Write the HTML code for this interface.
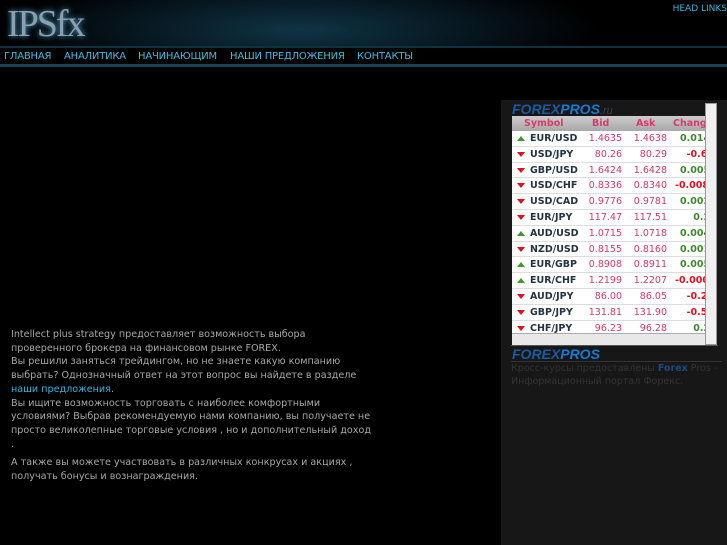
<!DOCTYPE html><html><head><meta charset="utf-8"><style>
body{margin:0;width:727px;height:545px;background:#000;overflow:hidden;font-family:"DejaVu Sans","Liberation Sans",sans-serif;position:relative}
.hdr{position:absolute;left:0;top:0;width:727px;height:48px;background:radial-gradient(ellipse 300px 60px at 300px 30px,#0f3446,#06141c 60%,#000 100%)}
.logo{position:absolute;left:7px;top:2px;font:38px "Liberation Serif",serif;color:#8aa0b0;letter-spacing:-2px;text-shadow:0 0 6px #5ab0e0}
.hl{position:absolute;right:0;top:4px;font-size:9px;color:#3ab7dd}
.nav{position:absolute;left:0;top:46px;width:727px;height:16px;background:#000;border-top:2px solid #0f3140;border-bottom:3px solid #164256}
.nav span{position:absolute;top:3px;font-size:10px;color:#4ab9dd;letter-spacing:-0.2px}
.txt{position:absolute;left:11px;top:328px;width:360px;font-size:9.6px;line-height:13.7px;color:#a8a8a8}
.txt a{color:#3ab5dd}
.panel{position:absolute;left:501px;top:100px;width:226px;height:445px;background:#171717}
.w{position:absolute;left:512px;top:116px;width:193px;height:229px;background:#fff;overflow:hidden}
.hd{height:15px;background:linear-gradient(#ccc,#a8a8a8);font-size:9.5px;font-weight:bold;color:#d93a6a;position:relative}
.r{height:15.8px;border-bottom:1px solid #ddd;box-sizing:border-box;position:relative;font-size:9.5px}
.r span,.hd span{position:absolute;top:2px}
.s{left:18px;font-weight:bold;color:#234}
.b{right:83px;color:#d0386a}.a{right:38px;color:#d0386a}
.c{left:168px;font-weight:bold;white-space:nowrap}
.g{color:#3a8a2a}.n{color:#e01020}
.ar{position:absolute;left:5px;top:5px;width:0;height:0;border-left:4px solid transparent;border-right:4px solid transparent}
.up{border-bottom:5px solid #3a9a2a}.dn{border-top:5px solid #e01020}
.sb{position:absolute;left:705px;top:103px;width:12px;height:242px;background:#f0f0f0;border:1px solid #999;box-sizing:border-box}
</style></head><body>
<div class="hdr"><div class="logo">IPSfx</div><div class="hl">HEAD LINKS</div></div>
<div class="nav"><span style="left:4px">ГЛАВНАЯ</span><span style="left:64px">АНАЛИТИКА</span><span style="left:138px">НАЧИНАЮЩИМ</span><span style="left:230px">НАШИ ПРЕДЛОЖЕНИЯ</span><span style="left:357px">КОНТАКТЫ</span></div>
<div class="txt">Intellect plus strategy предоставляет возможность выбора проверенного брокера на финансовом рынке FOREX.<br>Вы решили заняться трейдингом, но не знаете какую компанию выбрать? Однозначный ответ на этот вопрос вы найдете в разделе <a>наши предложения</a>.<br>Вы ищите возможность торговать с наиболее комфортными условиями? Выбрав рекомендуемую нами компанию, вы получаете не просто великолепные торговые условия , но и дополнительный доход .<div style="height:5px"></div>А также вы можете участвовать в различных конкрусах и акциях , получать бонусы и вознаграждения.</div>
<div class="panel"></div>
<div style="position:absolute;left:512px;top:101px;font:italic bold 14px 'Liberation Sans',sans-serif;color:#1a5aa0">FOREX<span style="color:#1a7ad0">PROS</span><span style="font-weight:normal;font-size:11px;color:#345">.ru</span></div>
<div class="w">
<div class="hd"><span style="left:12px">Symbol</span><span style="left:80px">Bid</span><span style="left:124px">Ask</span><span style="left:161px">Change</span></div>
<div class="r"><i class="ar up"></i><span class="s">EUR/USD</span><span class="b">1.4635</span><span class="a">1.4638</span><span class="c g">0.014</span></div>
<div class="r"><i class="ar dn"></i><span class="s">USD/JPY</span><span class="b">80.26</span><span class="a">80.29</span><span class="c n">&nbsp;&nbsp;-0.6</span></div>
<div class="r"><i class="ar dn"></i><span class="s">GBP/USD</span><span class="b">1.6424</span><span class="a">1.6428</span><span class="c g">0.005</span></div>
<div class="r"><i class="ar dn"></i><span class="s">USD/CHF</span><span class="b">0.8336</span><span class="a">0.8340</span><span class="c n" style="left:163px">-0.008</span></div>
<div class="r"><i class="ar dn"></i><span class="s">USD/CAD</span><span class="b">0.9776</span><span class="a">0.9781</span><span class="c g">0.002</span></div>
<div class="r"><i class="ar dn"></i><span class="s">EUR/JPY</span><span class="b">117.47</span><span class="a">117.51</span><span class="c g">&nbsp;&nbsp;&nbsp;&nbsp;0.2</span></div>
<div class="r"><i class="ar up"></i><span class="s">AUD/USD</span><span class="b">1.0715</span><span class="a">1.0718</span><span class="c g">0.004</span></div>
<div class="r"><i class="ar dn"></i><span class="s">NZD/USD</span><span class="b">0.8155</span><span class="a">0.8160</span><span class="c g">0.001</span></div>
<div class="r"><i class="ar up"></i><span class="s">EUR/GBP</span><span class="b">0.8908</span><span class="a">0.8911</span><span class="c g">0.005</span></div>
<div class="r"><i class="ar up"></i><span class="s">EUR/CHF</span><span class="b">1.2199</span><span class="a">1.2207</span><span class="c n" style="left:163px">-0.000</span></div>
<div class="r"><i class="ar dn"></i><span class="s">AUD/JPY</span><span class="b">86.00</span><span class="a">86.05</span><span class="c n">&nbsp;&nbsp;-0.2</span></div>
<div class="r"><i class="ar dn"></i><span class="s">GBP/JPY</span><span class="b">131.81</span><span class="a">131.90</span><span class="c n">&nbsp;&nbsp;-0.5</span></div>
<div class="r"><i class="ar dn"></i><span class="s">CHF/JPY</span><span class="b">96.23</span><span class="a">96.28</span><span class="c g">&nbsp;&nbsp;&nbsp;&nbsp;0.2</span></div>
<div style="position:absolute;left:0;top:217px;width:193px;height:12px;background:#e8e8e8;border-top:1px solid #aaa"></div>
</div>
<div class="sb"></div>
<div style="position:absolute;left:511px;top:345px;width:207px;height:1px;background:#555"></div>
<div style="position:absolute;left:512px;top:346px;font:italic bold 14px 'Liberation Sans',sans-serif;color:#1a5aa0">FOREX<span style="color:#1a7ad0">PROS</span></div>
<div style="position:absolute;left:511px;top:361px;width:211px;height:1px;background:#333"></div>
<div style="position:absolute;left:511px;top:362px;width:215px;font-size:9.5px;line-height:13px;color:#333">Кросс-курсы предоставлены <b style="color:#1a4a80">Forex</b> Pros - Информационный портал Форекс.</div>
</body></html>
